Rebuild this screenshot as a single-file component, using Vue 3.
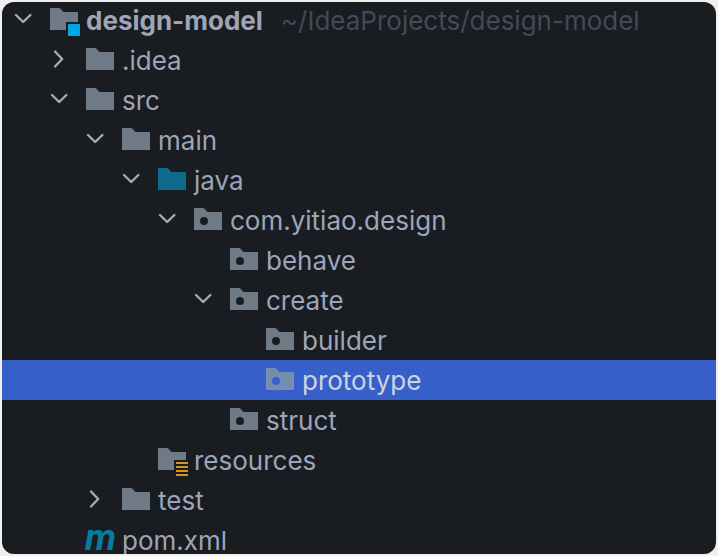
<template>
  <div class="panel">
    <ul class="tree" role="tree">
      <li
        v-for="node in visibleNodes"
        :key="node.id"
        class="row"
        :class="{ selected: node.id === selectedId }"
        :style="{ '--depth': node.depth }"
        role="treeitem"
        :aria-selected="node.id === selectedId"
        @click="selectedId = node.id"
      >
        <button
          v-if="node.open !== undefined"
          class="toggle"
          type="button"
          :aria-label="node.name"
          :aria-expanded="node.open"
          @click.stop="node.open = !node.open"
        >
          <svg viewBox="0 0 32 32">
            <path v-if="node.open" d="M8 11 L15.2 18 L22.4 11" />
            <path v-else d="M11 7.5 L18.2 15 L11 22.5" />
          </svg>
        </button>
        <span v-else class="toggle"></span>

        <!-- maven file -->
        <svg v-if="node.icon === 'maven'" class="icon" viewBox="0 0 32 32">
          <text class="maven" x="1" y="26">m</text>
        </svg>

        <!-- folders -->
        <svg v-else class="icon" :class="node.icon" viewBox="0 0 32 32">
          <path class="folder" fill-rule="evenodd" :d="folderPaths[node.icon] || folderPaths.plain" />
          <rect v-if="node.icon === 'module'" class="module-mark" x="20" y="20" width="12" height="12" />
          <path v-if="node.icon === 'resources'" class="resource-mark" d="M20 18h12v2h-12z M20 22h12v2h-12z M20 26h12v2h-12z M20 30h12v2h-12z" />
        </svg>

        <span class="name" :class="{ bold: node.depth === 0 }">{{ node.name }}</span>
        <span v-if="node.path" class="path">{{ node.path }}</span>
      </li>
    </ul>
  </div>
</template>

<script setup>
import { ref, computed } from 'vue';

const folderPaths = {
  plain: 'M2 4H10.5Q12 4 13 5.2L15.5 8H30V26H2Z',
  package: 'M2 4H10.5Q12 4 13 5.2L15.5 8H30V26H2Z M12 13a4 4 0 1 0 0 8a4 4 0 1 0 0 -8Z',
  module: 'M2 4H10.5Q12 4 13 5.2L15.5 8H30V18H18V26H2Z',
  resources: 'M2 4H10.5Q12 4 13 5.2L15.5 8H30V16H18V26H2Z'
};

// open is only set on nodes that can be expanded
const nodes = ref([
  { id: 1, depth: 0, name: 'design-model', path: '~/IdeaProjects/design-model', icon: 'module', open: true },
  { id: 2, depth: 1, name: '.idea', icon: 'plain', open: false },
  { id: 3, depth: 1, name: 'src', icon: 'plain', open: true },
  { id: 4, depth: 2, name: 'main', icon: 'plain', open: true },
  { id: 5, depth: 3, name: 'java', icon: 'source', open: true },
  { id: 6, depth: 4, name: 'com.yitiao.design', icon: 'package', open: true },
  { id: 7, depth: 5, name: 'behave', icon: 'package' },
  { id: 8, depth: 5, name: 'create', icon: 'package', open: true },
  { id: 9, depth: 6, name: 'builder', icon: 'package' },
  { id: 10, depth: 6, name: 'prototype', icon: 'package' },
  { id: 11, depth: 5, name: 'struct', icon: 'package' },
  { id: 12, depth: 3, name: 'resources', icon: 'resources' },
  { id: 13, depth: 2, name: 'test', icon: 'plain', open: false },
  { id: 14, depth: 1, name: 'pom.xml', icon: 'maven' }
]);

const selectedId = ref(10);

// skip everything below a collapsed node
const visibleNodes = computed(() => {
  let limit = Infinity;
  return nodes.value.filter((node) => {
    if (node.depth > limit) return false;
    limit = node.open === false ? node.depth : Infinity;
    return true;
  });
});
</script>

<style>
body {
  margin: 0;
  background-color: #f0f0ee;
}
</style>

<style scoped>
.panel {
  box-sizing: border-box;
  height: 100vh;
  border: 2px solid #f0f0ee;
  border-radius: 14px;
  background-color: #191c20;
  overflow: hidden;
}

.tree {
  list-style: none;
  margin: -2px 0 0;
  padding: 0;
}

.row {
  display: flex;
  align-items: center;
  height: 40px;
  padding-left: calc(6px + var(--depth) * 36px);
  font-family: Inter, "Liberation Sans", sans-serif;
  font-size: 26px;
  line-height: 32px;
  color: #9ea5b9;
  white-space: nowrap;
  cursor: default;
}

.row.selected {
  background-color: #365fc9;
  color: #ced3de;
}

.toggle {
  flex: none;
  width: 32px;
  height: 32px;
  margin-right: 8px;
  padding: 0;
  border: none;
  background: none;
}

.toggle svg {
  display: block;
  fill: none;
  stroke: #a9abae;
  stroke-width: 2.4;
  stroke-linecap: round;
  stroke-linejoin: round;
}

.icon {
  flex: none;
  width: 32px;
  height: 32px;
  margin-right: 6px;
  overflow: visible;
}

.folder {
  fill: #6e7b87;
}

.source .folder {
  fill: #0f6b8c;
}

.selected .folder {
  fill: #758eae;
}

.module-mark {
  fill: #00a8e1;
}

.resource-mark {
  fill: #d9921e;
}

.maven {
  font-family: Roboto, "Liberation Sans", sans-serif;
  font-size: 37px;
  font-weight: 700;
  font-style: italic;
  fill: #077ca0;
}

.name,
.path {
  padding-top: 2px;
}

.bold {
  font-weight: 700;
}

.path {
  margin-left: 18px;
  color: #434a59;
}
</style>
